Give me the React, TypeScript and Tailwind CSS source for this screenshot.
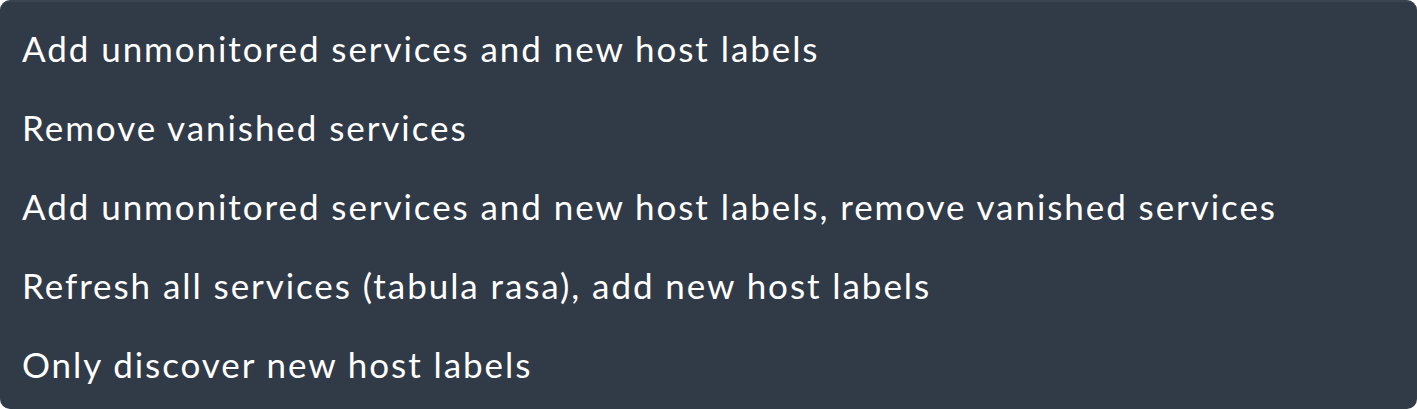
const options = [
  "Add unmonitored services and new host labels",
  "Remove vanished services",
  "Add unmonitored services and new host labels, remove vanished services",
  "Refresh all services (tabula rasa), add new host labels",
  "Only discover new host labels",
];

export default function App() {
  return (
    <div className="h-[409px] w-[1417px] bg-white">
      <div className="h-full w-full rounded-[10px] border-t-2 border-[#3a4350] bg-[#313a47] px-[22px] pt-[7px] font-['Lato',sans-serif] text-white">
        <ul className="flex flex-col">
          {options.map((o) => (
            <li key={o} className="h-[79px] text-[35px] leading-[79px] tracking-[1.93px]">
              {o}
            </li>
          ))}
        </ul>
      </div>
    </div>
  );
}
